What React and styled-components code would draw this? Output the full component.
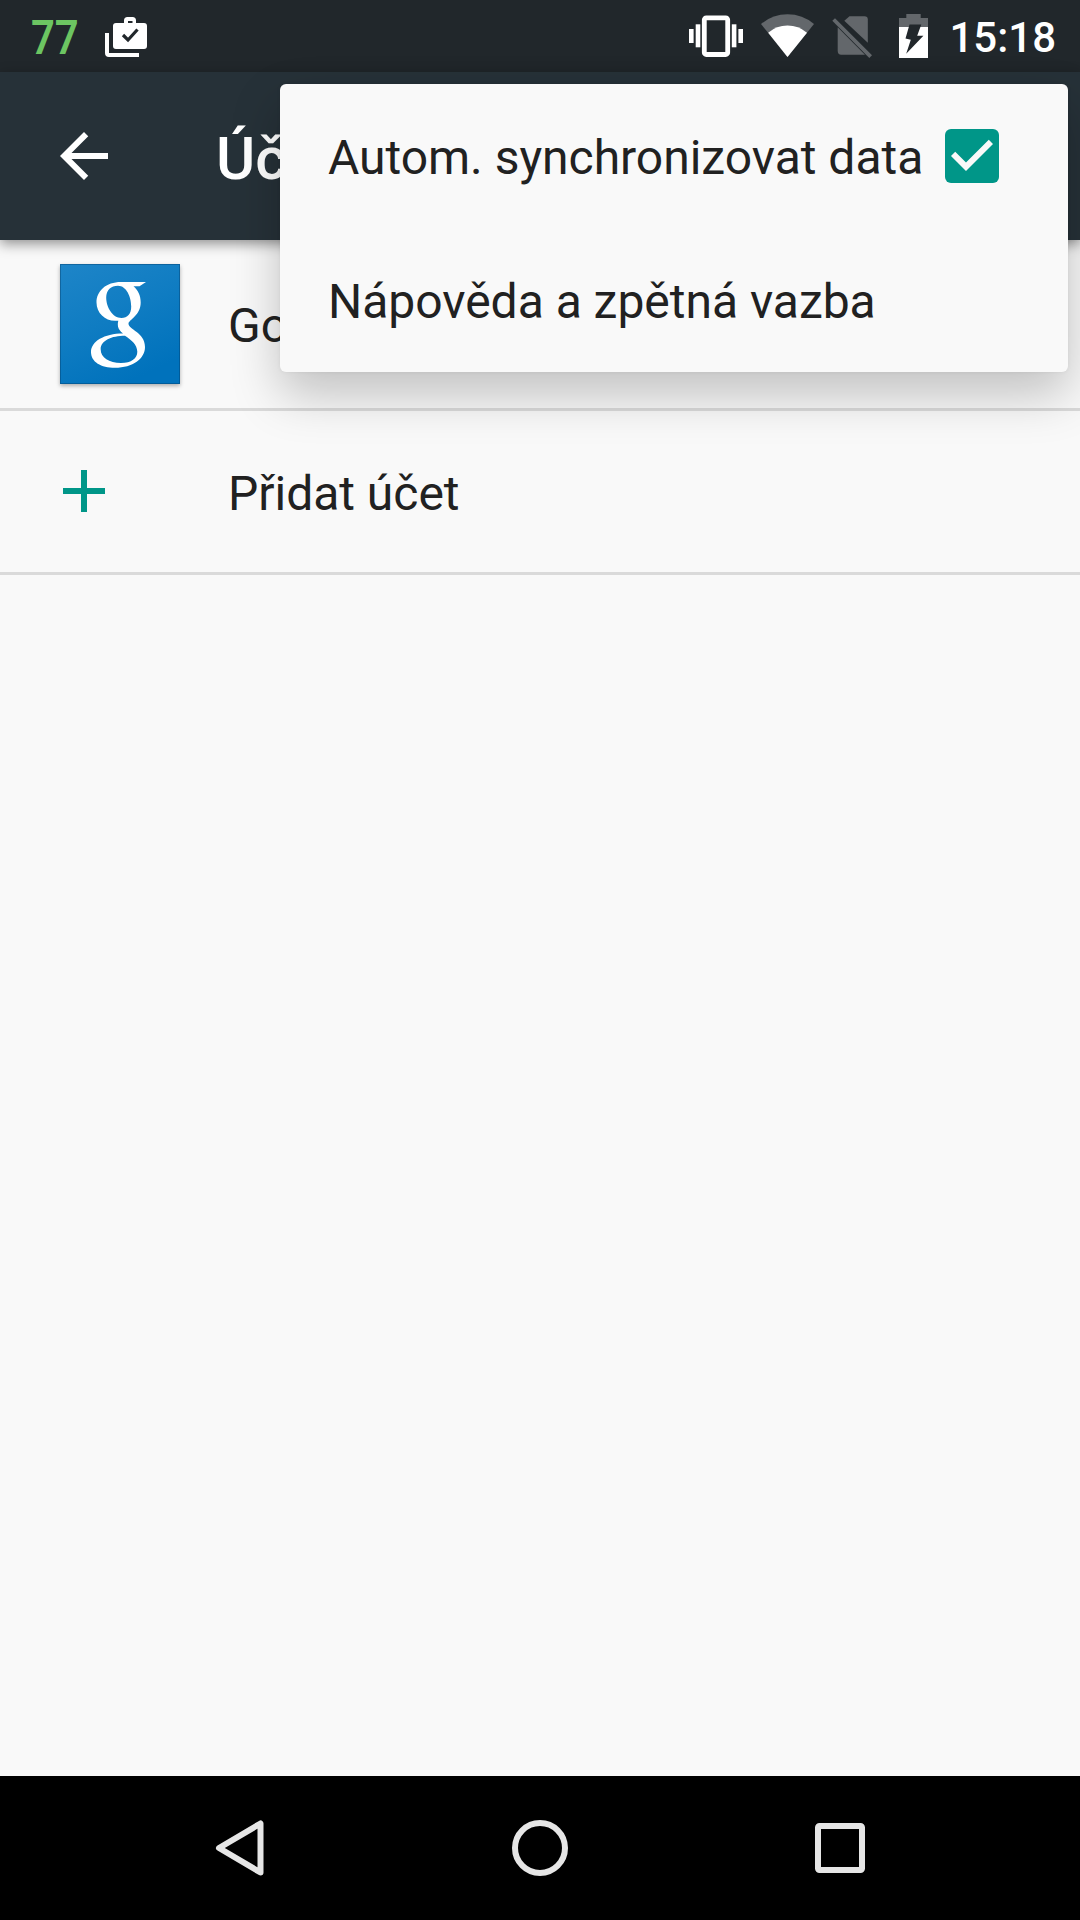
import React from "react";
import styled, { createGlobalStyle } from "styled-components";

const GlobalStyle = createGlobalStyle`
  * { box-sizing: border-box; }
  body { margin: 0; background: #f9f9f9; }
`;

const Screen = styled.div`
  position: relative;
  display: flex;
  flex-direction: column;
  width: 1080px;
  height: 1920px;
  overflow: hidden;
  background: #f9f9f9;
  color: #212121;
  font-family: Roboto, "Noto Sans", sans-serif;
  font-size: 48px;
`;

const StatusBar = styled.header`
  display: flex;
  justify-content: space-between;
  height: 72px;
  padding: 0 24px 0 31px;
  background: #21272b;
  color: #fff;
`;

const StatusGroup = styled.div`
  display: flex;
  align-items: center;
  gap: ${(p) => p.$gap || 0}px;
`;

const Level = styled.span`
  width: 47px;
  margin-right: 26px;
  padding-top: 4px;
  color: #6cc562;
  font-weight: 600;
  line-height: 68px;
  transform: scaleX(0.87);
  transform-origin: left center;
`;

const Clock = styled.time`
  padding-top: 4px;
  margin-left: 3px;
  font-size: 42px;
  font-weight: 500;
  line-height: 68px;
`;

const Icon = styled.svg`
  display: block;
  flex: none;
  overflow: visible;
  margin-left: ${(p) => p.$before || 0}px;
  margin-bottom: ${(p) => p.$lift || 0}px;
`;

const AppBar = styled.div`
  position: relative;
  display: flex;
  align-items: center;
  gap: 96px;
  height: 168px;
  padding-left: 48px;
  background: #263138;
  color: #fff;
  box-shadow: 0 4px 12px rgba(0, 0, 0, 0.42);
`;

const Title = styled.h1`
  margin: 0;
  padding-top: 4px;
  font-size: 60px;
  font-weight: 500;
`;

const List = styled.main`
  flex: 1;
`;

const Row = styled.div`
  display: flex;
  align-items: center;
  height: ${(p) => p.$height}px;
  padding-left: ${(p) => p.$inset}px;
  gap: ${(p) => p.$gap}px;
  border-bottom: 3px solid #dadada;
`;

const Label = styled.span`
  padding-top: 3px;
  letter-spacing: -0.02px;
  white-space: nowrap;
`;

const LogoTile = styled.div`
  width: 120px;
  height: 120px;
  background: linear-gradient(155deg, #1e85c8 0%, #0f7cc2 45%, #0072bc 85%);
  box-shadow: inset 0 0 0 1px rgba(0, 50, 90, 0.35), 0 2px 4px rgba(0, 0, 0, 0.3);
`;

const Menu = styled.div`
  position: absolute;
  top: 84px;
  left: 280px;
  width: 788px;
  border-radius: 6px;
  background: #f9f9f9;
  box-shadow: 0 22px 50px rgba(0, 0, 0, 0.23), 0 0 4px rgba(0, 0, 0, 0.06);
`;

const MenuItem = styled.div`
  display: flex;
  align-items: center;
  justify-content: space-between;
  height: 144px;
  padding: 0 60px 0 48px;
`;

const NavBar = styled.nav`
  display: flex;
  align-items: center;
  justify-content: space-between;
  height: 144px;
  padding: 0 204px;
  background: #000;
`;

const TasksIcon = () => (
  <Icon width="44" height="44" viewBox="104 14 44 44">
    <path d="M105 33h4v20h30v4h-30q-4 0-4-4z" fill="#fff" />
    <path
      fillRule="evenodd"
      fill="#fff"
      d="M124 23v-2.500q0-3.500 3.500-3.500h5q3.500 0 3.500 3.500V23h8q3 0 3 3v20q0 3-3 3h-28q-3 0-3-3V26q0-3 3-3zM128 23h4.500v-2H128z"
    />
    <path d="M123 35l5 5 9.500-10.500" fill="none" stroke="#21272b" strokeWidth="3.200" />
  </Icon>
);

const VibrateIcon = () => (
  <Icon width="54" height="42" viewBox="689 15 54 42">
    <g fill="#fff">
      <rect x="689" y="29" width="4.600" height="14" />
      <rect x="695.700" y="24.300" width="4.600" height="23" />
      <rect x="731.800" y="24.300" width="4.600" height="23" />
      <rect x="738.400" y="29" width="4.600" height="14" />
    </g>
    <rect x="704.300" y="17.800" width="23.400" height="36.700" rx="2" fill="none" stroke="#fff" strokeWidth="4.800" />
  </Icon>
);

const WifiIcon = () => (
  <Icon width="53" height="44" viewBox="761 14 53 44">
    <path d="M761 24Q772.500 14.300 787.500 14.300T814 24L787.500 57z" fill="#63676b" />
    <path d="M768.200 32.700Q776.500 25.600 787.500 25.600T807 32.700L787.500 57z" fill="#fff" />
  </Icon>
);

const NoSimIcon = () => (
  <Icon width="40" height="42" viewBox="832 15 40 42">
    <g fill="#63676b">
      <path d="M849.500 16.300H864.500q3.300 0 3.300 3.300V42.800L844.300 20.800z" />
      <path d="M837.700 27.300V51q0 3.700 3.500 3.700H865z" />
      <path d="M832.300 20.700L835 18.200 872 55.300 869.300 58z" />
    </g>
  </Icon>
);

const BatteryIcon = () => (
  <Icon $before={9} width="29" height="44" viewBox="899 14 29 44">
    <path d="M899 27V18h7.300v-4h14.400v4h7.300v9z" fill="#63676b" />
    <path d="M899 27h29v31h-29z" fill="#fff" />
    <path d="M909.500 24.500h11.800L917.200 35.800h6.200L906.200 53.800 910.800 39.800 905.500 38.500z" fill="#21272b" />
  </Icon>
);

const BackArrow = () => (
  <Icon width="72" height="72" viewBox="0 0 24 24" fill="#fff">
    <path d="M20 11H7.830l5.590-5.590L12 4l-8 8 8 8 1.410-1.410L7.830 13H20z" />
  </Icon>
);

const PlusIcon = () => (
  <Icon $lift={1} width="72" height="72" viewBox="0 0 24 24" fill="#009688">
    <path d="M19 13h-6v6h-2v-6H5v-2h6V5h2v6h6z" />
  </Icon>
);

const CheckboxIcon = () => (
  <Icon width="72" height="72" viewBox="0 0 24 24">
    <rect x="3" y="3" width="18" height="18" rx="2" fill="#009688" />
    <path d="M10 17l-5-5 1.410-1.410L10 14.170l7.590-7.590L19 8z" fill="#f9f9f9" />
  </Icon>
);

const GoogleLogo = () => (
  <Icon width="120" height="120" viewBox="0 0 120 120">
    <path
      fill="#fff"
      fillRule="evenodd"
      d="M86 18H61C46 18 36.500 27 36.500 38.500C36.500 49 45 56.800 55 56.800L58.300 56.700C57.500 60 57 65 63 69.500C44 69.500 31 77.500 31 88C31 98 41 103.800 55 103.800C73 103.800 85 94.500 85 83C85 68 68.500 66 68.500 59.500C68.500 56 80.700 51.500 80.700 38.500C80.700 31.500 78 26 73.500 22.200H79.500zM58 21.700C66.500 21.700 71.200 33 71.200 42.500C71.200 50 67.500 54 61.500 54C52.500 54 46.200 43 46.200 33.500C46.200 26 51 21.700 58 21.700zM65 71.800C71 76 77.300 80.500 77.300 87.800C77.300 94.500 71.500 99 61 99C49 99 40.700 93.500 40.700 85.500C40.700 76.500 51.500 71.800 65 71.800z"
    />
  </Icon>
);

export default function App() {
  return (
    <>
      <GlobalStyle />
      <Screen>
        <StatusBar>
          <StatusGroup>
            <Level>77</Level>
            <TasksIcon />
          </StatusGroup>
          <StatusGroup $gap={18}>
            <VibrateIcon />
            <WifiIcon />
            <NoSimIcon />
            <BatteryIcon />
            <Clock>15:18</Clock>
          </StatusGroup>
        </StatusBar>
        <AppBar>
          <BackArrow />
          <Title>Účty</Title>
        </AppBar>
        <List>
          <Row $height={171} $inset={60} $gap={48}>
            <LogoTile>
              <GoogleLogo />
            </LogoTile>
            <Label>Google</Label>
          </Row>
          <Row $height={164} $inset={48} $gap={108}>
            <PlusIcon />
            <Label>Přidat účet</Label>
          </Row>
        </List>
        <NavBar>
          <Icon width="72" height="72" viewBox="0 0 72 72">
            <path d="M56.500 11.500V60.500L15 36z" fill="none" stroke="#e6e6e6" strokeWidth="6" strokeLinejoin="round" />
          </Icon>
          <Icon width="72" height="72" viewBox="0 0 72 72">
            <circle cx="36" cy="36" r="25" fill="none" stroke="#e6e6e6" strokeWidth="6" />
          </Icon>
          <Icon width="72" height="72" viewBox="0 0 72 72">
            <rect x="14" y="14" width="44" height="44" rx="1.500" fill="none" stroke="#e6e6e6" strokeWidth="6" />
          </Icon>
        </NavBar>
        <Menu>
          <MenuItem>
            <Label>Autom. synchronizovat data</Label>
            <CheckboxIcon />
          </MenuItem>
          <MenuItem>
            <Label>Nápověda a zpětná vazba</Label>
          </MenuItem>
        </Menu>
      </Screen>
    </>
  );
}
